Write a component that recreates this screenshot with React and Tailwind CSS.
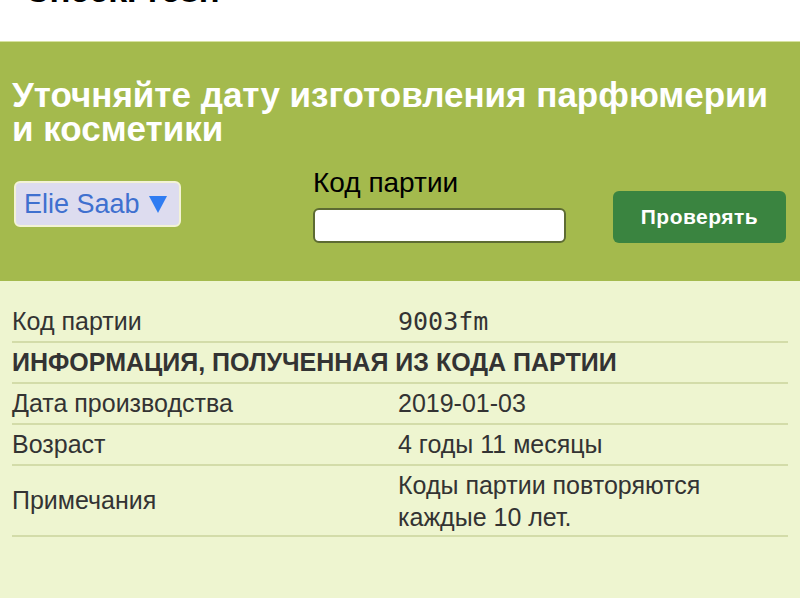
import React from "react";

const rows = [
  { label: "Дата производства", value: "2019-01-03" },
  { label: "Возраст", value: "4 годы 11 месяцы" },
];

const App = () => {
  return (
    <div className="w-[800px] h-[614px] bg-white overflow-hidden font-['Liberation_Sans',Arial,sans-serif]">
      {/* top logo, scrolled mostly out of view */}
      <div className="h-[41px] overflow-hidden px-[25px]">
        <div className="mt-[-27px] text-[34px] leading-[34px] font-bold text-black">CheckFresh</div>
      </div>

      <div className="bg-[#a4ba4d] border-t border-[#d6e2a0] px-[12px] pt-[36px] h-[240px]">
        <h1 className="max-w-[770px] text-white font-bold text-[35px] leading-[34px]">
          Уточняйте дату изготовления парфюмерии и косметики
        </h1>
        <div className="flex items-start mt-[22px]">
          <div className="mt-[13px] ml-[2px] h-[46px] w-[167px] rounded-[6px] border-2 border-[#f3f3d6] bg-[#dddcef] flex items-center px-[8px] whitespace-nowrap text-[27px] text-[#3f70cf]">
            <span>Elie Saab</span>
            <svg className="ml-[8px]" width="20" height="20" viewBox="0 0 20 20">
              <polygon points="1,2 19,2 10,19" fill="#2f7cf2" />
            </svg>
          </div>
          <div className="ml-[132px] flex flex-col">
            <label className="text-[28px] leading-[30px] text-black">Код партии</label>
            <input className="mt-[10px] w-[253px] h-[35px] bg-white rounded-[6px] border-2 border-[#5d6b33] outline-none" type="text" />
          </div>
          <button className="ml-[47px] mt-[23px] w-[173px] h-[52px] rounded-[6px] bg-[#3a8440] text-white font-bold text-[21px] tracking-[0.5px]">
            Проверять
          </button>
        </div>
      </div>

      <div className="bg-[#eef5d0] h-[317px] px-[12px] pt-[21px] text-[#333] text-[25px]">
        <div className="flex items-center h-[41px] border-b-2 border-[#d3dca9]">
          <div className="w-[386px]">Код партии</div>
          <div className="font-['DejaVu_Sans_Mono',monospace] text-[25px]">9003fm</div>
        </div>
        <div className="flex items-center h-[41px] border-b-2 border-[#d3dca9] font-bold">
          ИНФОРМАЦИЯ, ПОЛУЧЕННАЯ ИЗ КОДА ПАРТИИ
        </div>
        {rows.map((r) => (
          <div key={r.label} className="flex items-center h-[41px] border-b-2 border-[#d3dca9]">
            <div className="w-[386px]">{r.label}</div>
            <div>{r.value}</div>
          </div>
        ))}
        <div className="flex items-center h-[71px] border-b-2 border-[#d3dca9]">
          <div className="w-[386px]">Примечания</div>
          <div className="leading-[32px]">
            Коды партии повторяются
            <br />
            каждые 10 лет.
          </div>
        </div>
      </div>
    </div>
  );
};

export default App;
